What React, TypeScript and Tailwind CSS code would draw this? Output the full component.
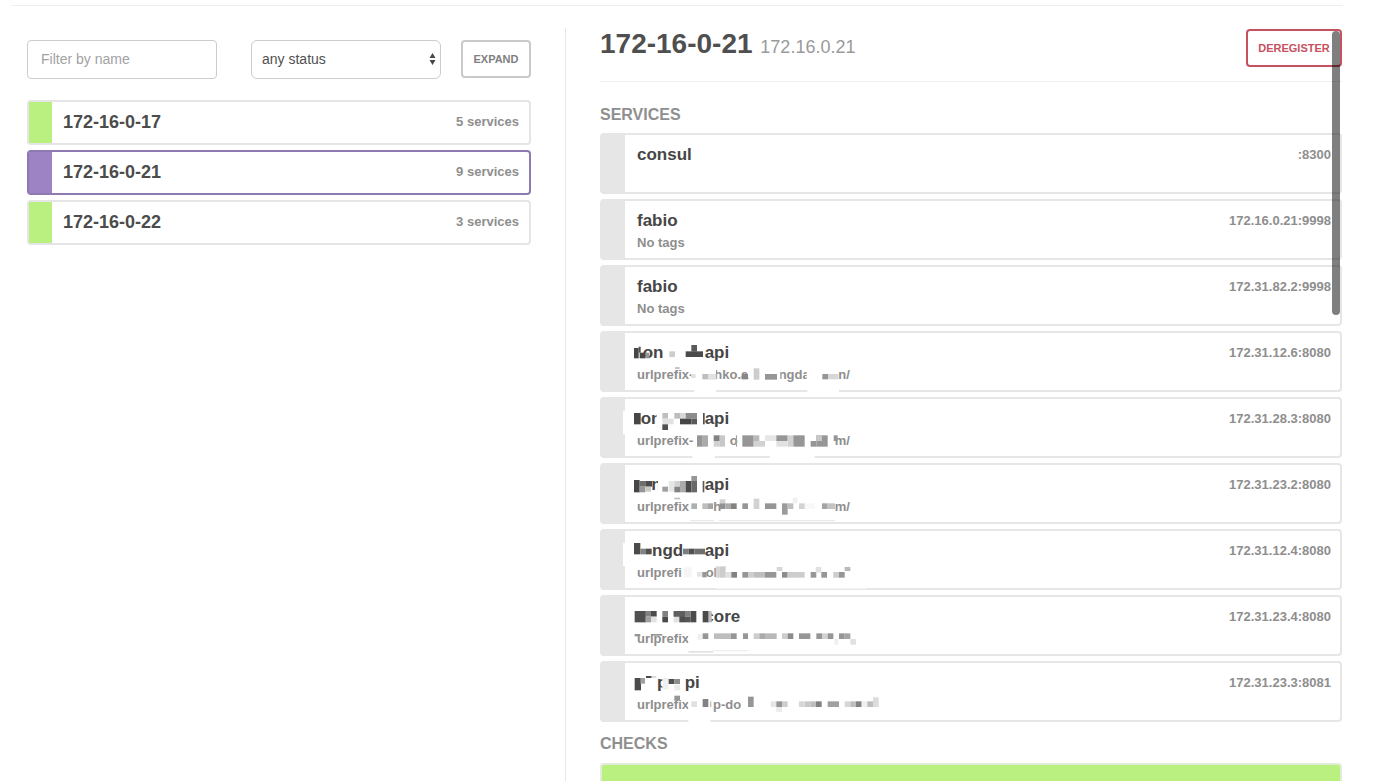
type Cell = [x: number, y: number, w: number, h: number, gray: number];
type Fragment = [x: number, text: string];

interface Service {
  name: string | Fragment[];
  tags: string | Fragment[];
  address: string;
  mask?: Cell[];
}

const nodes = [
  { name: "172-16-0-17", services: "5 services", selected: false },
  { name: "172-16-0-21", services: "9 services", selected: true },
  { name: "172-16-0-22", services: "3 services", selected: false },
];

// Fragment and mask coordinates are in thirds of a pixel.
const TEXT_START = 138;

const services: Service[] = [
  { name: "consul", tags: "", address: ":8300" },
  { name: "fabio", tags: "No tags", address: "172.16.0.21:9998" },
  { name: "fabio", tags: "No tags", address: "172.31.82.2:9998" },
  {
    name: [[155, "on"], [341, "api"]],
    tags: [[138, "urlprefix-"], [370, "hko.a"], [563, "ngda"], [742, "n/"]],
    address: "172.31.12.6:8080",
    mask: [
      [132, 54, 14, 31, 70], [146, 50, 6, 18, 80], [149, 68, 17, 17, 70], [166, 68, 12, 17, 150],
      [238, 64, 17, 17, 205], [287, 64, 52, 17, 75], [304, 45, 17, 20, 90],
      [255, 112, 14, 4, 170], [303, 132, 14, 12, 225], [365, 110, 13, 22, 255],
      [337, 132, 17, 16, 190], [354, 132, 25, 17, 225], [455, 132, 19, 16, 135],
      [491, 115, 17, 34, 205], [525, 132, 36, 17, 150], [563, 114, 8, 36, 255], [650, 114, 14, 36, 255],
      [697, 132, 17, 16, 150], [714, 132, 31, 16, 215],
      [312, 178, 66, 12, 255], [652, 178, 95, 12, 255],
    ],
  },
  {
    name: [[149, "on"], [341, "api"]],
    tags: [[138, "urlprefix-"], [416, "o"], [731, "m/"]],
    address: "172.31.28.3:8080",
    mask: [
      [132, 51, 20, 34, 70], [200, 48, 18, 40, 255],
      [217, 51, 17, 17, 190], [217, 68, 17, 17, 225], [234, 68, 17, 17, 225], [217, 85, 17, 17, 80],
      [253, 51, 17, 17, 190], [270, 51, 17, 17, 215], [287, 51, 34, 17, 140], [270, 68, 34, 17, 70],
      [304, 68, 17, 17, 90], [339, 51, 5, 34, 80],
      [321, 118, 17, 34, 150], [337, 118, 17, 34, 170], [371, 118, 19, 17, 130], [371, 135, 17, 17, 210],
      [388, 118, 17, 34, 200], [438, 118, 3, 34, 160], [457, 118, 34, 34, 150], [491, 118, 17, 17, 185],
      [491, 135, 34, 17, 210], [525, 118, 34, 17, 230], [559, 118, 34, 17, 150], [593, 118, 17, 34, 210],
      [559, 135, 34, 17, 225], [610, 118, 34, 34, 150], [662, 135, 17, 17, 150], [679, 118, 34, 34, 150],
      [679, 118, 17, 17, 200], [731, 118, 12, 17, 150],
      [99, 45, 8, 70, 255], [307, 178, 68, 12, 255], [540, 178, 134, 12, 255],
    ],
  },
  {
    name: [[181, "n"], [341, "api"]],
    tags: [[138, "urlprefix"], [367, "h"], [731, "m/"]],
    address: "172.31.23.2:8080",
    mask: [
      [132, 54, 17, 37, 70], [149, 57, 17, 17, 110], [149, 74, 17, 17, 150], [166, 57, 20, 17, 75],
      [166, 74, 17, 15, 200], [204, 50, 12, 42, 255], [217, 74, 17, 15, 160], [236, 57, 17, 32, 230],
      [253, 57, 17, 17, 210], [253, 74, 17, 17, 130], [270, 57, 17, 34, 170], [287, 57, 17, 34, 75],
      [304, 42, 17, 17, 150], [304, 57, 17, 34, 105], [338, 57, 5, 34, 90],
      [253, 107, 17, 5, 190], [304, 124, 17, 17, 175], [337, 124, 17, 17, 190], [354, 124, 15, 17, 165],
      [389, 112, 17, 12, 210], [389, 124, 17, 17, 145], [406, 124, 17, 17, 170], [423, 124, 17, 17, 130],
      [457, 124, 17, 17, 150], [491, 110, 17, 31, 210], [525, 124, 34, 17, 150], [576, 124, 17, 34, 155],
      [593, 124, 17, 17, 190], [608, 107, 14, 17, 240], [627, 124, 17, 17, 210], [645, 124, 30, 17, 248],
      [696, 124, 17, 17, 165], [713, 124, 22, 17, 195],
      [300, 174, 72, 4, 235], [387, 174, 348, 4, 235],
    ],
  },
  {
    name: [[183, "ngd"], [341, "api"]],
    tags: [[138, "urlprefi"], [344, "ol"]],
    address: "172.31.12.4:8080",
    mask: [
      [132, 45, 19, 34, 75], [151, 62, 17, 17, 130], [168, 62, 17, 17, 80],
      [279, 62, 17, 17, 125], [296, 62, 17, 17, 80], [313, 62, 32, 17, 110],
      [281, 118, 24, 30, 245], [321, 132, 16, 14, 230], [337, 132, 13, 16, 150],
      [377, 115, 13, 34, 215], [390, 115, 17, 34, 205], [407, 132, 17, 17, 225], [424, 132, 17, 17, 130],
      [457, 132, 17, 17, 150], [474, 132, 17, 17, 205], [491, 132, 34, 17, 190], [525, 132, 34, 17, 150],
      [560, 117, 17, 12, 215], [576, 132, 17, 17, 140], [593, 132, 34, 17, 205], [627, 132, 17, 17, 205],
      [662, 132, 17, 17, 150], [677, 117, 17, 17, 225], [694, 132, 17, 17, 150], [730, 132, 17, 17, 205],
      [747, 132, 17, 17, 150], [764, 117, 17, 12, 185],
      [99, 45, 8, 70, 255], [378, 180, 452, 3, 245],
    ],
  },
  {
    name: [[340, "core"]],
    tags: [[138, "urlprefix"]],
    address: "172.31.23.4:8080",
    mask: [
      [134, 51, 34, 34, 80], [166, 51, 17, 17, 130], [166, 68, 17, 17, 160], [183, 51, 17, 17, 75],
      [183, 68, 17, 17, 225], [217, 51, 17, 17, 130], [217, 68, 17, 17, 75], [251, 51, 17, 17, 150],
      [251, 68, 17, 17, 225], [268, 51, 17, 34, 80], [251, 51, 34, 17, 95], [285, 51, 17, 17, 130],
      [285, 68, 17, 17, 85], [302, 51, 17, 34, 75], [338, 51, 19, 34, 75], [355, 51, 10, 34, 190],
      [134, 120, 17, 7, 150], [183, 120, 34, 5, 150], [295, 114, 12, 38, 255],
      [323, 120, 14, 17, 240], [338, 118, 17, 17, 150], [372, 118, 51, 17, 190], [423, 118, 17, 17, 150],
      [459, 118, 15, 17, 150], [491, 118, 17, 17, 205], [508, 118, 17, 17, 170], [525, 118, 35, 17, 185],
      [576, 118, 17, 17, 205], [593, 118, 17, 17, 140], [627, 118, 34, 17, 150], [679, 118, 17, 17, 150],
      [696, 118, 17, 17, 210], [713, 118, 17, 17, 150], [747, 118, 17, 17, 150], [764, 118, 17, 17, 165],
      [733, 135, 12, 17, 240], [781, 135, 17, 17, 225],
      [295, 171, 75, 5, 225], [370, 168, 103, 4, 238],
    ],
  },
  {
    name: [[198, "p"], [281, "pi"]],
    tags: [[138, "urlprefix"], [366, "p-do"]],
    address: "172.31.23.3:8081",
    mask: [
      [134, 54, 19, 37, 75], [151, 54, 14, 17, 160], [168, 48, 17, 6, 75], [185, 48, 14, 6, 220],
      [217, 50, 17, 48, 255], [219, 54, 17, 34, 240], [236, 57, 17, 15, 80], [253, 57, 17, 15, 140],
      [253, 74, 17, 17, 235], [253, 107, 17, 15, 150], [295, 114, 9, 38, 255], [304, 124, 17, 17, 225],
      [338, 117, 17, 24, 130], [360, 124, 4, 17, 190], [474, 110, 17, 31, 150],
      [542, 124, 17, 17, 230], [559, 124, 17, 17, 150], [576, 124, 17, 17, 205], [559, 141, 17, 15, 235],
      [627, 124, 17, 17, 215], [644, 124, 17, 17, 200], [661, 124, 17, 17, 190], [678, 124, 17, 17, 130],
      [713, 124, 34, 17, 160], [764, 124, 17, 17, 215], [781, 124, 17, 17, 190], [798, 124, 17, 17, 130],
      [815, 124, 17, 17, 240], [832, 124, 17, 17, 190], [849, 112, 17, 29, 220],
      [295, 180, 66, 10, 255],
    ],
  },
];

function Line({ value }: { value: string | Fragment[] }) {
  if (typeof value === "string") return <>{value}</>;
  const first = value[0][0];
  return (
    <span className="flex" style={{ paddingLeft: (first - TEXT_START) / 3 }}>
      {value.map(([x, text], i) => {
        const next = value[i + 1];
        return (
          <span key={x} className="shrink-0 whitespace-pre" style={next ? { width: (next[0] - x) / 3 } : undefined}>
            {text}
          </span>
        );
      })}
    </span>
  );
}

function Mask({ cells }: { cells: Cell[] }) {
  return (
    <svg
      className="pointer-events-none absolute top-0 left-0 h-[57px] w-[280px] overflow-visible"
      viewBox="105 9 840 171"
      aria-hidden="true"
    >
      {cells.map(([x, y, w, h, g], i) => (
        <rect key={i} x={x} y={y} width={w} height={h} fill={`rgb(${g},${g},${g})`} />
      ))}
    </svg>
  );
}

function NodeRow({ name, services, selected }: (typeof nodes)[number]) {
  return (
    <a
      href="#node"
      className={
        selected
          ? "flex h-[45px] rounded border-2 border-[#8d7ab0] bg-white"
          : "flex h-[45px] rounded border-2 border-[#e5e4e6] bg-white"
      }
    >
      <span className={selected ? "w-[23px] shrink-0 bg-[#9d83c4]" : "w-[23px] shrink-0 bg-[#baf07f]"} />
      <span className="flex flex-1 items-start justify-between pt-2 pr-[10px] pl-[11px] font-bold">
        <span className="text-[18px] leading-6 text-[#4c4c4c]">{name}</span>
        <span className="text-[13px] leading-6 text-[#8e8e8e]">{services}</span>
      </span>
    </a>
  );
}

function ServiceRow({ name, tags, address, mask }: Service) {
  return (
    <li className="flex h-[61px] rounded-sm border-2 border-[#e6e6e6] bg-white font-bold">
      <div className="w-[23px] shrink-0 bg-[#e6e6e6]" />
      <div className="relative flex flex-1 items-start justify-between pt-2 pr-[9px] pl-3">
        <div>
          <h3 className="text-[17px] leading-6 text-[#464646]">
            <Line value={name} />
          </h3>
          <p className="text-[13px] leading-5 text-[#8e8e8e]">
            <Line value={tags} />
          </p>
        </div>
        <span className="text-[13px] leading-6 text-[#8e8e8e]">{address}</span>
        {mask && <Mask cells={mask} />}
      </div>
    </li>
  );
}

export default function App() {
  return (
    <div className="h-screen overflow-hidden bg-white pt-[5px] pr-[57px] pl-[11px] font-['Liberation_Sans',Arial,sans-serif]">
      <div className="flex h-full flex-col border-t border-[#eeeeee] pt-[22px]">
        <div className="flex min-h-0 flex-1">
          <aside className="w-5/12 border-r border-[#e6e6e6] pt-3 pr-[34px] pl-4">
            <form className="flex" onSubmit={(e) => e.preventDefault()}>
              <div className="min-w-0 flex-1">
                <input
                  type="text"
                  aria-label="Filter by name"
                  placeholder="Filter by name"
                  className="h-[39px] w-full rounded border border-[#cccccc] px-[13px] pb-[2px] text-[14px] text-[#555] placeholder:text-[#a2a2a2]"
                />
              </div>
              <div className="relative ml-[34px] min-w-0 flex-1">
                <select
                  aria-label="Status"
                  className="h-[39px] w-full appearance-none rounded-md border border-[#cccccc] bg-white px-[10px] text-[14px] text-[#505050]"
                >
                  <option>any status</option>
                  <option>passing</option>
                  <option>failing</option>
                </select>
                <svg
                  className="pointer-events-none absolute top-[13px] right-[5px] h-3 w-[7px] fill-[#484848]"
                  viewBox="0 0 7 12"
                  aria-hidden="true"
                >
                  <path d="M3.5 0 6.5 5h-6zM3.5 12 .5 7h6z" />
                </svg>
              </div>
              <button
                type="button"
                className="ml-[20px] h-[38px] w-[70px] rounded-sm border-2 border-[#c9c9c9] bg-white text-[11px] font-bold text-[#808080]"
              >
                EXPAND
              </button>
            </form>
            <nav className="mt-[21px] flex flex-col gap-[5px]">
              {nodes.map((n) => (
                <NodeRow key={n.name} {...n} />
              ))}
            </nav>
          </aside>

          <main className="relative w-7/12 overflow-hidden pr-px pl-[34px]">
            <header className="flex items-start justify-between border-b border-[#eeeeee] pb-[14px]">
              <h1 className="text-[28px] leading-8 font-bold text-[#4f4f4f]">
                172-16-0-21 <small className="text-[18px] font-normal text-[#9a9a9a]">172.16.0.21</small>
              </h1>
              <button
                type="button"
                className="mt-px h-[38px] w-24 rounded border-2 border-[#c6515f] bg-white text-[11px] font-bold text-[#c6515f]"
              >
                DEREGISTER
              </button>
            </header>

            <h2 className="mt-[23px] mb-2 text-[16px] leading-5 font-bold text-[#8f8f8f]">SERVICES</h2>
            <ul className="flex flex-col gap-[5px]">
              {services.map((s) => (
                <ServiceRow key={s.address} {...s} />
              ))}
            </ul>

            <h2 className="mt-3 mb-[9px] text-[16px] leading-5 font-bold text-[#8f8f8f]">CHECKS</h2>
            <div className="h-[61px] rounded-sm border-2 border-[#e3ecd9] bg-[#baf07f]" />

            <div className="absolute top-[3px] right-[3px] h-[284px] w-2 rounded-full bg-black/50" />
          </main>
        </div>
      </div>
    </div>
  );
}
